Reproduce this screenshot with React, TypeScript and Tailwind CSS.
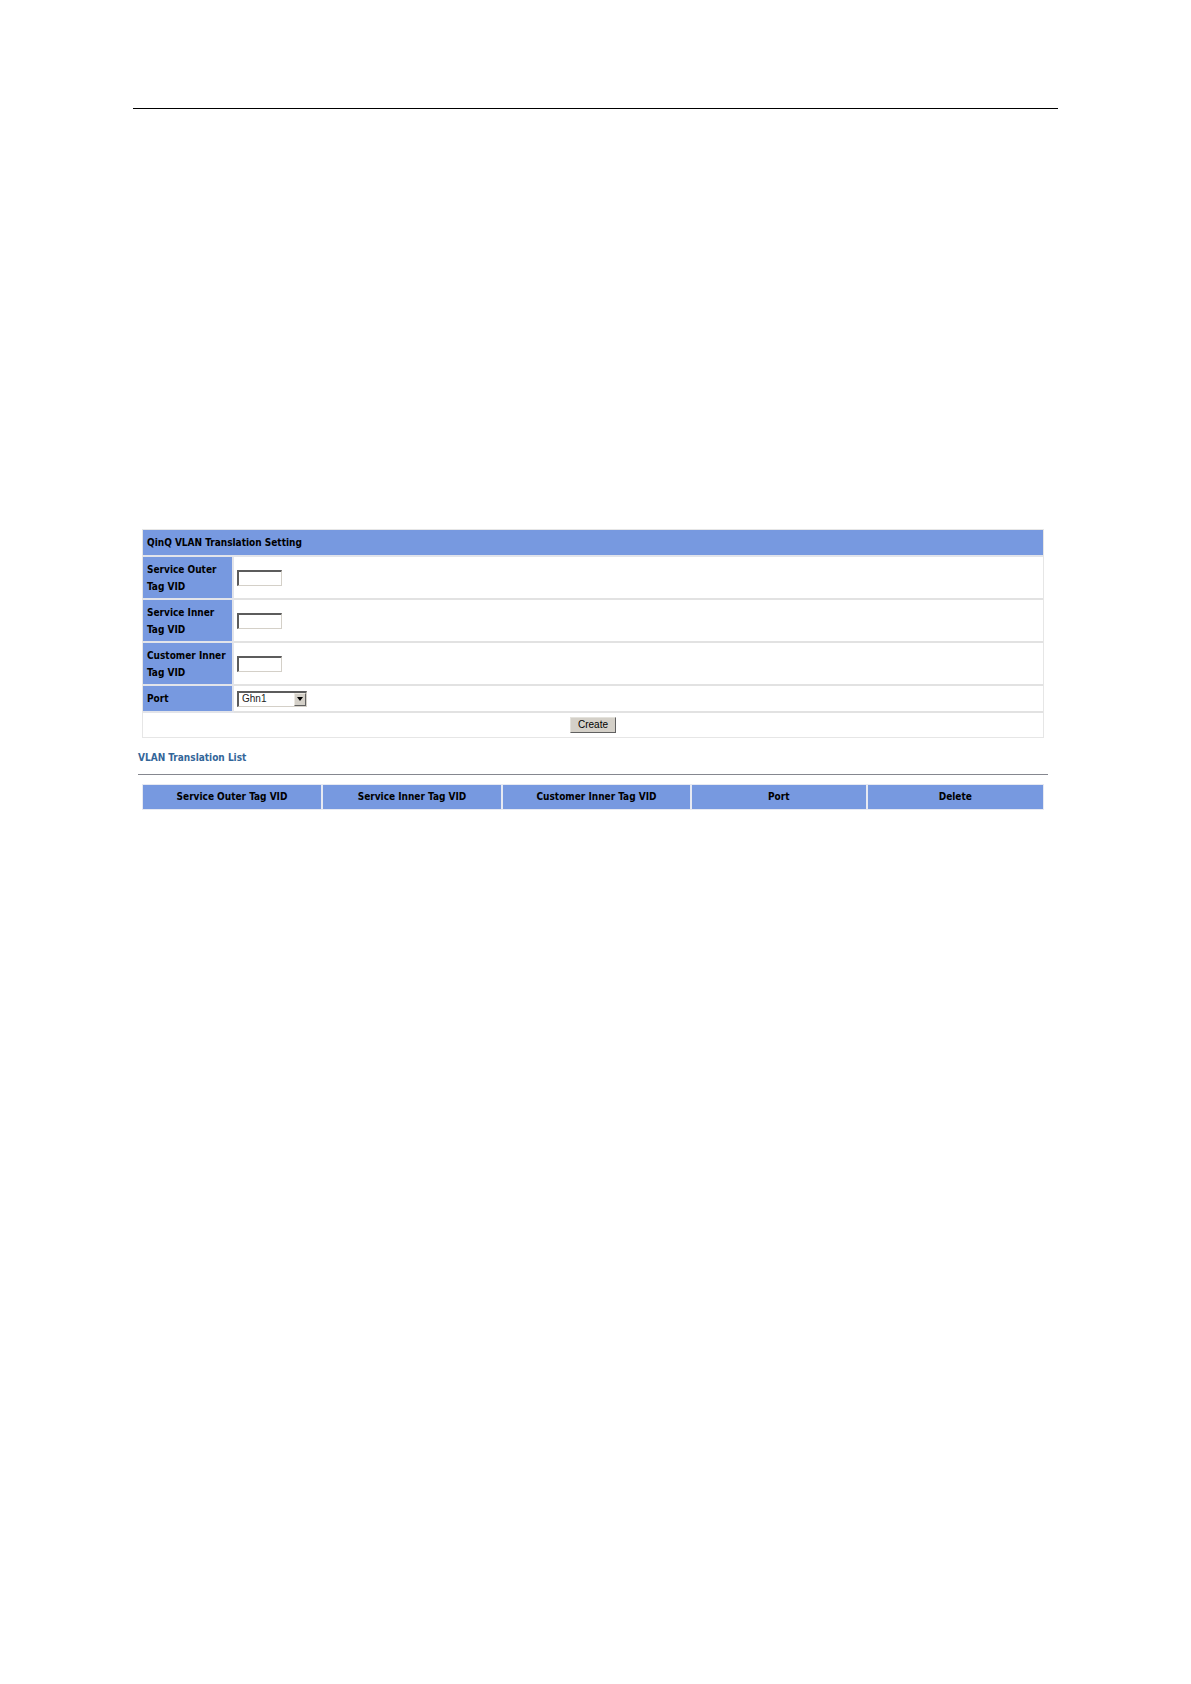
const vidFields = [
  { id: "service-outer", label: "Service Outer Tag VID" },
  { id: "service-inner", label: "Service Inner Tag VID" },
  { id: "customer-inner", label: "Customer Inner Tag VID" },
];

const columns = [
  { name: "Service Outer Tag VID", width: "w-[20%]" },
  { name: "Service Inner Tag VID", width: "w-[20%]" },
  { name: "Customer Inner Tag VID", width: "w-[21%]" },
  { name: "Port", width: "w-auto" },
  { name: "Delete", width: "w-auto" },
];

const sunken =
  "rounded-none border-t-2 border-l-2 border-r border-b border-t-[#5c5c5c] border-l-[#5c5c5c] border-r-[#d4d0c8] border-b-[#d4d0c8] bg-white font-['Liberation_Sans',sans-serif] text-[10px] text-[#222222] outline-none";

function SettingTable() {
  return (
    <table className="w-full table-fixed border-separate border-spacing-0 border border-[#e6e6e6]">
      <colgroup>
        <col className="w-[91px]" />
        <col />
      </colgroup>
      <thead>
        <tr>
          <th
            colSpan={2}
            className="h-[27px] border-b-2 border-[#e2e4ea] bg-[#7799e0] px-1 text-left"
          >
            QinQ VLAN Translation Setting
          </th>
        </tr>
      </thead>
      <tbody>
        {vidFields.map((field) => (
          <tr key={field.id}>
            <th
              scope="row"
              className="border-r-2 border-b-2 border-[#e2e4ea] bg-[#7799e0] pt-1 pb-[3px] pl-1 text-left leading-[17px]"
            >
              <label htmlFor={field.id}>{field.label}</label>
            </th>
            <td className="border-b-2 border-[#e2e2e2] px-[3px]">
              <input
                id={field.id}
                type="text"
                className={`block h-4 w-[45px] px-1 ${sunken}`}
              />
            </td>
          </tr>
        ))}
        <tr>
          <th
            scope="row"
            className="h-[27px] border-r-2 border-b-2 border-[#e2e4ea] bg-[#7799e0] pl-1 text-left"
          >
            <label htmlFor="port">Port</label>
          </th>
          <td className="border-b-2 border-[#e2e2e2] px-[3px]">
            <div className="relative w-[70px]">
              <select
                id="port"
                className={`block h-4 w-full appearance-none pl-[3px] leading-3 ${sunken}`}
              >
                <option>Ghn1</option>
              </select>
              <span className="pointer-events-none absolute top-0.5 right-px bottom-px flex w-3 items-center justify-center border border-t-[#ece9e2] border-r-[#606060] border-b-[#606060] border-l-[#ece9e2] bg-[#d4d0c8]">
                <svg width="6" height="4" viewBox="0 0 6 4" aria-hidden="true">
                  <path d="M0 0h6L3 4z" fill="#000" />
                </svg>
              </span>
            </div>
          </td>
        </tr>
        <tr>
          <td colSpan={2} className="h-6 text-center">
            <button
              type="button"
              className="mx-auto block h-4 w-[46px] border border-t-[#e4e2dc] border-r-[#606060] border-b-[#606060] border-l-[#e4e2dc] bg-[#d4d0c8] font-['Liberation_Sans',sans-serif] text-[10px] leading-3 font-normal"
            >
              Create
            </button>
          </td>
        </tr>
      </tbody>
    </table>
  );
}

function TranslationList() {
  return (
    <table className="w-full table-fixed border-separate border-spacing-0 border border-[#e6e9f2]">
      <thead>
        <tr>
          {columns.map((column) => (
            <th
              key={column.name}
              scope="col"
              className={`h-6 border-r-2 border-[#e6e9f2] bg-[#7799e0] text-center last:border-r-0 ${column.width}`}
            >
              {column.name}
            </th>
          ))}
        </tr>
      </thead>
    </table>
  );
}

export default function App() {
  return (
    <div className="bg-white px-[133px] pt-[108px] pb-24 font-['DejaVu_Sans_Condensed','DejaVu_Sans',sans-serif] text-[10px] leading-4 text-black">
      <hr className="border-t border-black" />
      <main className="mt-[420px] mr-[10px] ml-[5px]">
        <section className="mx-1">
          <SettingTable />
        </section>
        <h2 className="mt-3 border-b border-[#85878f] pb-2 font-bold text-[#336699]">
          VLAN Translation List
        </h2>
        <section className="mx-1 mt-[9px]">
          <TranslationList />
        </section>
      </main>
    </div>
  );
}
